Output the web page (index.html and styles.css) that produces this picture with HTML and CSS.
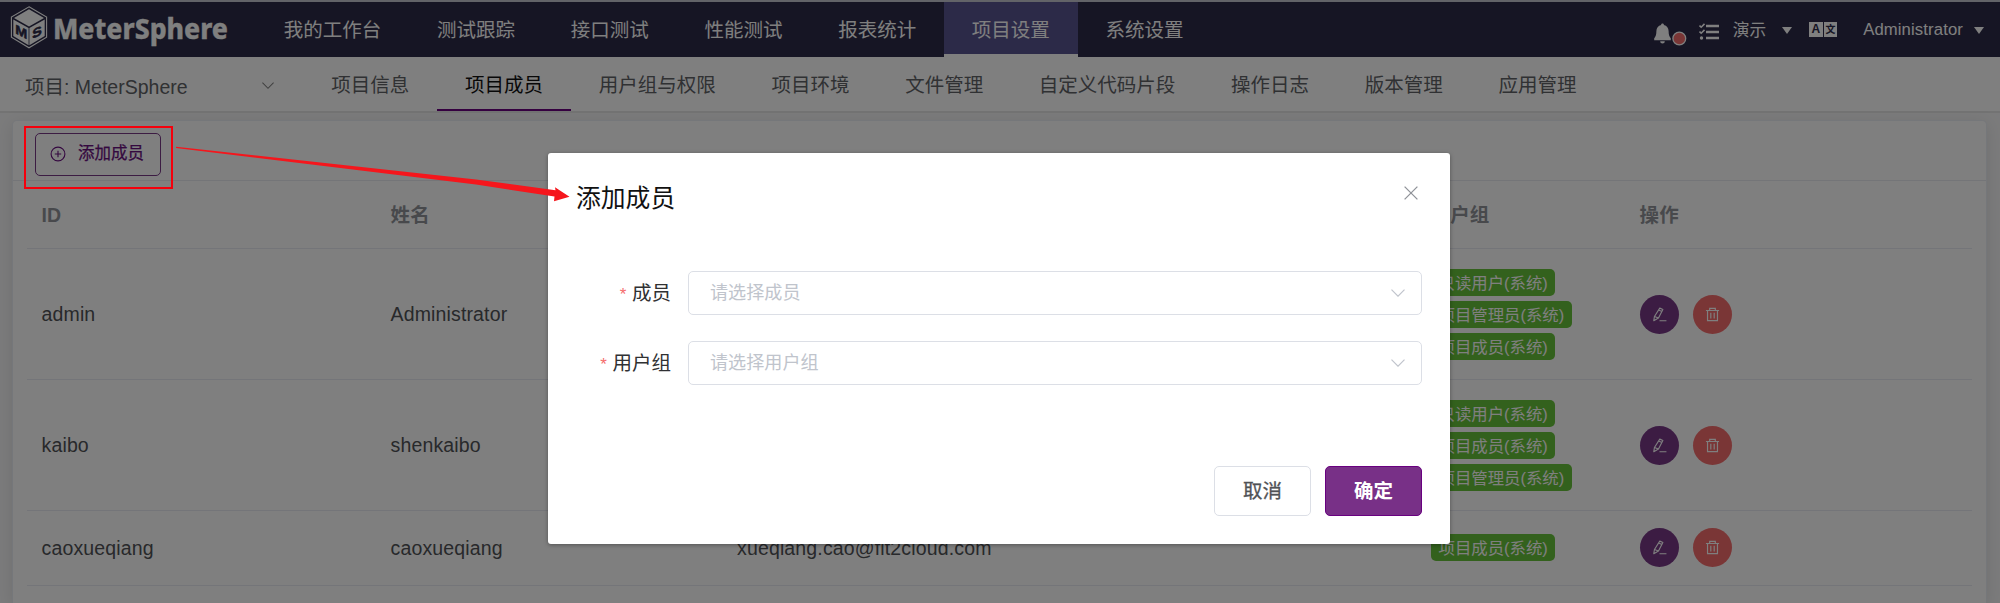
FILE: index.html
```html
<!DOCTYPE html>
<html lang="zh-CN">
<head>
<meta charset="utf-8">
<title>MeterSphere</title>
<link rel="stylesheet" href="styles.css">
</head>
<body>
<svg class="symbols" aria-hidden="true">
  <symbol id="i-down" viewBox="0 0 14 8"><path d="M.5 .7 7 7.2 13.5 .7" fill="none" stroke="currentColor" stroke-width="1.2"/></symbol>
  <symbol id="i-edit" viewBox="0 0 16 16"><path d="M8.3 1.2 11.6 2.7 6.9 11.7 1.9 14.6 2.6 10.1ZM7.1 3.3 10.5 4.9M2.6 10.1 6.9 11.7M8 14.6H15.4" fill="none" stroke="currentColor" stroke-width="1.2" stroke-linejoin="round"/></symbol>
  <symbol id="i-trash" viewBox="0 0 16 16"><path d="M1 3.7H15M5 3.7V1.4H11V3.7M2.7 3.7V14.6H13.3V3.7M6.2 6.2V12.2M9.8 6.2V12.2" fill="none" stroke="currentColor" stroke-width="1.25"/></symbol>
</svg>
<header class="topbar">
  <svg class="logo" width="230" height="52" viewBox="0 0 230 52">
    <path d="M23 2.8 40.6 13V33.3L23 43.8 5.4 33.3V13Z" fill="none" stroke="#fff" stroke-width="1.1"/>
    <path d="M23 5.3 38 14 23 22.6 8 14Z M7.3 15.4 22.6 24.1V41.2L7.3 32Z M38.7 15.4 23.4 24.1V41.2L38.7 32Z" fill="#fff"/>
    <text class="logo-face" transform="matrix(1 .5 0 1 9.2 29.3)" textLength="12" lengthAdjust="spacingAndGlyphs">M</text>
    <text class="logo-face" transform="matrix(1 -.5 0 1 26.2 35)" textLength="9.5" lengthAdjust="spacingAndGlyphs">S</text>
    <text class="logo-word" x="47" y="34.5" textLength="175" lengthAdjust="spacingAndGlyphs">MeterSphere</text>
  </svg>
  <nav class="menu main-menu">
    <a>我的工作台</a><a>测试跟踪</a><a>接口测试</a><a>性能测试</a><a>报表统计</a><a class="active">项目设置</a><a>系统设置</a>
  </nav>
  <div class="tools">
    <svg class="bell" width="34" height="24" viewBox="0 0 34 24">
      <path d="M8.5 1.5c.9 0 1.4.6 1.4 1.4 3 .8 4.7 3 4.7 6.2 0 4 .8 5.6 2.2 7.1v2H.2v-2c1.4-1.5 2.2-3.1 2.2-7.1 0-3.2 1.7-5.4 4.7-6.2 0-.8.5-1.4 1.4-1.4ZM6.2 19.2h4.6c0 1.300-1 2.300-2.300 2.300s-2.300-1-2.300-2.300Z" fill="#fff"/>
      <circle cx="25.3" cy="16.5" r="6.4" fill="#f56c6c" stroke="#fff" stroke-width="1.3"/>
    </svg>
    <svg class="tasks" width="20" height="18" viewBox="0 0 20 18" fill="none" stroke="#fff">
      <path d="M7 3H20M7 9H20M7 15H20" stroke-width="2.3"/>
      <path d="M.5 2.5 2.2 4.2 5.5.9M.5 8.5 2.2 10.2 5.5 6.9" stroke-width="1.6"/>
      <circle cx="2.5" cy="15" r="1.7" fill="#fff" stroke="none"/>
    </svg>
    <span class="workspace">演示</span><i class="caret"></i>
    <span class="lang"><b>A</b><b class="zh">文</b></span>
    <span class="user">Administrator</span><i class="caret"></i>
  </div>
</header>
<div class="subbar">
  <div class="project"><span>项目: MeterSphere</span><svg width="12" height="7"><use href="#i-down"/></svg></div>
  <nav class="menu sub-menu">
    <a>项目信息</a><a class="active">项目成员</a><a>用户组与权限</a><a>项目环境</a><a>文件管理</a><a>自定义代码片段</a><a>操作日志</a><a>版本管理</a><a>应用管理</a>
  </nav>
</div>
<main class="card">
  <div class="card-head">
    <button class="add"><svg width="16" height="16" viewBox="0 0 16 16" fill="none" stroke="currentColor" stroke-width="1.1"><circle cx="8" cy="8" r="6.9"/><path d="M4.8 8H11.2M8 4.8V11.2"/></svg>添加成员</button>
  </div>
  <div class="table">
    <div class="row head"><span>ID</span><span>姓名</span><span>邮箱</span><span></span><span>用户组</span><span>操作</span></div>
    <div class="row tall"><span>admin</span><span>Administrator</span><span></span><span></span>
      <div class="tags"><b>只读用户(系统)</b><b>项目管理员(系统)</b><b>项目成员(系统)</b></div>
      <div class="ops"><button class="round edit"><svg><use href="#i-edit"/></svg></button><button class="round del"><svg><use href="#i-trash"/></svg></button></div></div>
    <div class="row tall"><span>kaibo</span><span>shenkaibo</span><span></span><span></span>
      <div class="tags"><b>只读用户(系统)</b><b>项目成员(系统)</b><b>项目管理员(系统)</b></div>
      <div class="ops"><button class="round edit"><svg><use href="#i-edit"/></svg></button><button class="round del"><svg><use href="#i-trash"/></svg></button></div></div>
    <div class="row"><span>caoxueqiang</span><span>caoxueqiang</span><span>xueqiang.cao@fit2cloud.com</span><span></span>
      <div class="tags"><b>项目成员(系统)</b></div>
      <div class="ops"><button class="round edit"><svg><use href="#i-edit"/></svg></button><button class="round del"><svg><use href="#i-trash"/></svg></button></div></div>
    <div class="row"><span></span><span></span><span></span><span></span><div class="tags"></div>
      <div class="ops"><button class="round edit"><svg><use href="#i-edit"/></svg></button><button class="round del"><svg><use href="#i-trash"/></svg></button></div></div>
  </div>
</main>
<div class="overlay">
  <section class="dialog">
    <div class="dialog-head"><h2>添加成员</h2><svg width="14" height="14" viewBox="0 0 14 14"><path d="M.6.6 13.4 13.4M13.4.6.6 13.4" stroke="#909399" stroke-width="1.3"/></svg></div>
    <div class="form">
      <div class="field"><label><i>*</i>成员</label><div class="select"><span>请选择成员</span><svg width="14" height="8"><use href="#i-down"/></svg></div></div>
      <div class="field"><label><i>*</i>用户组</label><div class="select"><span>请选择用户组</span><svg width="14" height="8"><use href="#i-down"/></svg></div></div>
    </div>
    <div class="dialog-foot"><button class="btn">取消</button><button class="btn primary">确定</button></div>
  </section>
</div>
<div class="callout"></div>
<svg class="arrow" width="400" height="60" viewBox="0 0 400 60"><path d="M0 .8 300 33.500 379.500 44.300 379 41.300 393.500 50.700 378 55.300 378.500 50.500 300 38.500 0 2Z" fill="#f5161c"/></svg>
</body>
</html>
```
FILE: styles.css
```css
* { box-sizing: border-box; }
body {
  margin: 0;
  width: 2000px;
  height: 603px;
  overflow: hidden;
  position: relative;
  background: #f7f7f8;
  color: #606266;
  font: 19.5px/1.2 "Liberation Sans", "Noto Sans CJK SC", sans-serif;
}
button { font: inherit; margin: 0; padding: 0; }
.symbols { position: absolute; width: 0; height: 0; }

.topbar {
  display: flex;
  height: 57px;
  background: #2c2a48;
  border-top: 2px solid #c4c6d0;
}
.logo { margin: 2px 20px 0 6px; flex: none; overflow: visible; }
.logo-face { font: bold 13px "Liberation Sans", sans-serif; fill: #2c2a48; stroke: #2c2a48; stroke-width: .5; }
.logo-word { font: 800 29px "Noto Sans", sans-serif; fill: #fff; stroke: #fff; stroke-width: .3; }
.menu { display: flex; }
.menu a { display: flex; align-items: center; padding: 0 27.85px; white-space: nowrap; }
.main-menu a { color: #fff; padding-top: 5px; border-bottom: 3px solid transparent; }
.main-menu .active { background: #595591; background-clip: padding-box; border-bottom-color: #fff; }

.tools { margin-left: auto; display: flex; align-items: center; color: #fff; font-size: 16.7px; padding-right: 16px; }
.bell { margin: 9px 11px 0 0; }
.tasks { margin: 4px 14px 0 0; }
.workspace { margin-right: 16px; padding-top: 3px; }
.caret { border: 5px solid transparent; border-top: 7px solid #fff; border-bottom: 0; margin-top: 1px; }
.lang { display: flex; margin: 0 26px 0 17px; gap: 1px; }
.lang b {
  width: 13.5px; height: 15px; background: #fff; color: #2c2a48;
  font: bold 12px/15px "Liberation Sans", sans-serif; text-align: center;
}
.lang .zh { font: bold 10px/14px "Noto Sans CJK SC", sans-serif; }
.user { margin-right: 11px; padding-top: 2px; letter-spacing: .12px; }

.subbar { display: flex; height: 56px; background: #fff; border-bottom: 2px solid #e6e6e6; }
.project { width: 303.5px; padding: 8px 30px 0 25px; display: flex; align-items: center; justify-content: space-between; }
.project svg { color: #808080; margin-top: -6px; }
.sub-menu a { border-bottom: 2.5px solid transparent; padding-top: 6px; }
.sub-menu .active { color: #111; border-color: #6a0080; }

.card {
  margin: 7px 13px 0 12px;
  height: 483px;
  overflow: hidden;
  background: #fff;
  border: 1px solid #ebeef5;
  border-bottom: 0;
  border-radius: 5px 5px 0 0;
  box-shadow: 0 3px 17px rgba(0, 0, 0, .1);
}
.card-head { height: 60px; padding: 11.5px 22px; border-bottom: 1px solid #e9ebf1; }
.add {
  width: 126px; height: 43px;
  display: flex; align-items: center; padding-left: 14px; gap: 12px;
  background: #fff; color: #6a1080; border: 1.4px solid #783887; border-radius: 5px;
  font-size: 16.5px; -webkit-text-stroke: .25px currentColor;
}
.table { padding: 0 14px; }
.row {
  display: grid;
  grid-template-columns: 349.5px 346.5px 347px 346.5px 209px 1fr;
  align-items: center;
  height: 74.5px;
  border-bottom: 1px solid #e9ebf3;
  color: #505256;
}
.row > * { padding-left: 14px; }
.row > :first-child { padding-left: 14.5px; }
.row.tall { height: 131px; }
.row.head { height: 68px; font-weight: bold; color: #909399; }
.row > span { letter-spacing: .15px; padding-top: 2px; }
.tags { display: flex; flex-direction: column; align-items: flex-start; gap: 5px; }
.tags b {
  height: 27px; padding: 1px 7.5px 0 8px; border-radius: 5px;
  background: #67c23a; color: #fff; font-weight: 400; font-size: 16.4px; line-height: 27px; white-space: nowrap;
}
.ops { display: flex; gap: 14px; }
.round { width: 39px; height: 39px; border: 0; border-radius: 50%; color: #fff; display: flex; align-items: center; justify-content: center; }
.round svg { width: 15px; height: 15px; }
.edit { background: #783887; }
.del { background: #f56c6c; }

.overlay { position: absolute; inset: 0; background: rgba(0, 0, 0, .5); display: flex; justify-content: center; align-items: flex-start; padding: 153px 2px 0 0; }
.dialog { width: 902px; height: 390.5px; background: #fff; border-radius: 3px; box-shadow: 0 1px 4px rgba(0, 0, 0, .35); padding: 0 28px; }
.dialog-head { height: 117.5px; padding-top: 30px; display: flex; justify-content: space-between; align-items: flex-start; }
.dialog-head h2 { margin: 0; font-size: 24.8px; font-weight: 400; color: #111; line-height: 32px; }
.dialog-head svg { margin: 3px 4px 0 0; }
.form { display: flex; flex-direction: column; gap: 25.5px; }
.field { display: flex; align-items: center; }
.field label { width: 112px; padding: 2px 17px 0 0; text-align: right; color: #303133; flex: none; white-space: nowrap; }
.field i { font-style: normal; color: #f56c6c; margin-right: 5.5px; font-size: 17px; }
.select {
  flex: 1; height: 44.5px; border: 1.4px solid #dcdfe6; border-radius: 5px;
  display: flex; align-items: center; justify-content: space-between; padding: 0 16px 0 21px;
  color: #c0c4cc; font-size: 18.1px;
}
.select span { padding-top: 3px; }
.dialog-foot { display: flex; justify-content: flex-end; gap: 14px; padding-top: 80.5px; }
.btn { width: 97px; height: 50px; padding-top: 2px; background: #fff; border: 1px solid #dcdfe6; border-radius: 5px; color: #505256; -webkit-text-stroke: .3px currentColor; }
.btn.primary { background: #783087; border-color: #690080; color: #fff; font-weight: bold; -webkit-text-stroke: 0; }

.callout { position: absolute; left: 24px; top: 125.5px; width: 149px; height: 63px; border: 2px solid #f5000c; }
.arrow { position: absolute; left: 176px; top: 146px; }
```
